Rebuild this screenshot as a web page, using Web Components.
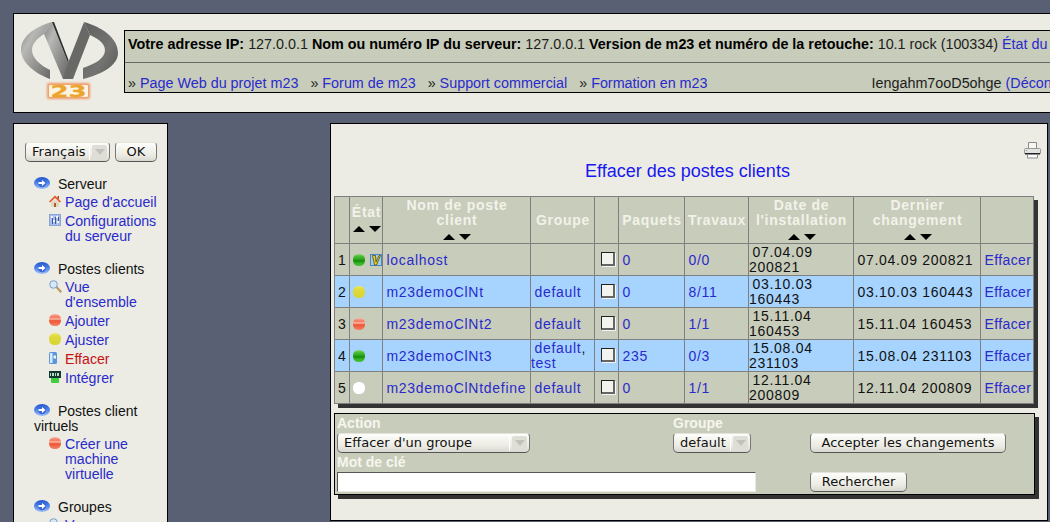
<!DOCTYPE html>
<html lang="fr">
<head>
<meta charset="utf-8">
<title>m23</title>
<style>
  html, body { margin: 0; height: 522px; overflow: hidden; background: #5a6073; }
  body { font: 14px/16px "Liberation Sans", Arial, sans-serif; }
</style>
</head>
<body>
<m23-page></m23-page>

<script>
// Small status ball and menu icons
const BALLS = {
  green: 'linear-gradient(#8ad878 0, #4cc03a 18%, #30a81f 42%, #128a08 58%, #2fae1e 72%, #4cc238 100%)',
  yellow: 'linear-gradient(#ece868 0, #deda3c 30%, #d8d432 100%)',
  red: 'linear-gradient(#f8b8a8 0, #f4735a 26%, #f9b8a6 42%, #ee5234 56%, #f48468 100%)',
  white: 'linear-gradient(#fff, #fff)'
};

const ICONS = {
  arrow: `<svg width="16" height="12" viewBox="0 0 16 12"><defs><linearGradient id="a" x1="0" y1="0" x2="0" y2="1"><stop offset="0" stop-color="#1f55d0"/><stop offset=".5" stop-color="#4f84ea"/><stop offset="1" stop-color="#a4c2f6"/></linearGradient></defs><ellipse cx="8" cy="6" rx="8" ry="6" fill="url(#a)"/><circle cx="8" cy="6" r="4.200" fill="#3a68d4"/><path d="M4.500 5h3.500V3l3.500 3L8 9V7H4.500z" fill="#fff"/></svg>`,
  home: `<svg width="12" height="12" viewBox="0 0 12 12"><path d="M2 5.500h8V12H2z" fill="#e4d8c0"/><path d="M5 8h2v4H5z" fill="#a86030"/><path d="M0 6.500 6 .5l6 6-1 1L6 3 1 7.500z" fill="#e8562c"/><path d="M8.500 1H10v3.500L8.500 3z" fill="#a84820"/></svg>`,
  config: `<svg width="12" height="12" viewBox="0 0 12 12"><path d="M0 0h12v12H0z" fill="#88a4d8"/><path d="M1 1h10v10H1z" fill="#a8bee6"/><path d="M2 2h2v2H2zM7 2h2v2H7zM4 6h2v2H4zM8 7h2v2H8z" fill="#f0f4fc"/><path d="M3 4h1v6H3zM6 3h1v7H6zM9 3h1v4H9z" fill="#3c5aa0"/></svg>`,
  search: `<svg width="13" height="13" viewBox="0 0 13 13"><path d="M6.500 7.500l1.500-1.500 5 5.500-1.500 1.500z" fill="#b8985a"/><circle cx="4.500" cy="4.500" r="3.800" fill="#d4e8fa" stroke="#7c9cc4"/></svg>`,
  trash: `<svg width="8" height="12" viewBox="0 0 8 12"><rect width="8" height="12" rx="1.500" fill="#5a96e0"/><path d="M1 1h2.500v10H1z" fill="#dcebfb"/><path d="M4.500 3.500H7v3H4.500z" fill="#f2f6fc"/></svg>`,
  chip: `<svg width="12" height="12" viewBox="0 0 12 12"><path d="M2 7h8v4a1 1 0 0 1-1 1H3a1 1 0 0 1-1-1z" fill="#3cd03a"/><path d="M0 0h12v7H0z" fill="#103a30"/><path d="M1 2h1v3H1zM3 2h2v3H3zM6 2h1v3H6zM8 2h2v3H8z" fill="#b8d8c8"/></svg>`,
  check: `<svg width="12" height="12" viewBox="0 0 12 12"><path d="M0 0h12v12H0z" fill="#4a88c0"/><path d="M1 1h10v10H1z" fill="#a8cce0"/><path d="M2.500 1.500h3L6 8l3-6.500h1.500L6.500 11H4.500z" fill="#e4d020" stroke="#403c10" stroke-width=".7"/></svg>`,
  printer: `<svg width="17" height="17" viewBox="0 0 17 17"><path d="M4.500.5h8v6h-8z" fill="#f6f6f2" stroke="#8a8a8a"/><path d="M1.500 6.500h14a1 1 0 0 1 1 1v4h-16v-4a1 1 0 0 1 1-1z" fill="#e2e2e2" stroke="#9a9a9a"/><path d="M1 11h15v1.500H1z" fill="#222"/><path d="M3.500 12.500h10v3.500h-10z" fill="#fbfbfb" stroke="#8a8a8a"/><path d="M2 8h1v1H2z" fill="#5cc05c"/></svg>`
};

class M23Icon extends HTMLElement {
  connectedCallback() {
    const root = this.attachShadow({ mode: 'open' });
    const ball = BALLS[this.getAttribute('ball')];
    const name = this.getAttribute('name');
    root.innerHTML = `
      <style>
        :host { display: inline-block; line-height: 0; vertical-align: top; }
        .ball { display: block; width: 12px; height: 12px; border-radius: 45%; }
      </style>
      ${ball ? `<span class="ball" style="background:${ball}"></span>` : ICONS[name]}`;
  }
}

class M23Logo extends HTMLElement {
  connectedCallback() {
    this.attachShadow({ mode: 'open' }).innerHTML = `
      <style>
        :host { display: block; width: 103px; height: 86px; flex: none; }
        svg { display: block; }
        text { font: bold 15px "DejaVu Sans", sans-serif; }
      </style>
      <svg width="103" height="86" viewBox="21 20 103 86">
        <defs>
          <linearGradient id="left" x1="0" y1="0" x2="1" y2="1">
            <stop offset="0" stop-color="#7e7e7e"/><stop offset=".3" stop-color="#b8b8b6"/>
            <stop offset=".65" stop-color="#8e8e8c"/><stop offset="1" stop-color="#646464"/>
          </linearGradient>
          <linearGradient id="right" x1="0" y1="0" x2="1" y2="1">
            <stop offset="0" stop-color="#5e5e5e"/><stop offset=".6" stop-color="#747472"/>
            <stop offset="1" stop-color="#565656"/>
          </linearGradient>
          <filter id="glow" x="-20%" y="-30%" width="140%" height="160%"><feGaussianBlur stdDeviation="1"/></filter>
        </defs>
        <path d="M52 22 C34 27 21 37 21 50 C21 63 36 74 50 79 L50 70 C40 65 32 58 32 50 C32 43 38 38 44 34 Z" fill="url(#left)"/>
        <path d="M44 34 L52 22 L68 63 L67 79 L63 79 Z" fill="url(#left)"/>
        <path d="M52 22 L68.500 64 L68.500 60 L54 22 Z" fill="#2c2c2c"/>
        <path d="M63 79 L68 63 L84 22 L90 35 L73 79 Z" fill="#686866"/>
        <path d="M84 22 C102 27 118 38 118 53 C118 66 100 75 83 79 L83 68 C94 64 105 59 105 50 C105 43 97 38 90 35 Z" fill="url(#right)"/>
        <rect x="47" y="83" width="43" height="16" rx="2" fill="#f29a64" filter="url(#glow)"/>
        <rect x="49" y="85" width="39" height="12" rx="1" fill="#fbf2e0"/>
        <text x="68.500" y="96.500" text-anchor="middle" fill="#eca52c" stroke="#eca52c" stroke-width=".3" textLength="36" lengthAdjust="spacingAndGlyphs">23</text>
      </svg>`;
  }
}

class M23Header extends HTMLElement {
  connectedCallback() {
    this.attachShadow({ mode: 'open' }).innerHTML = `
      <style>
        :host { display: flex; align-items: flex-start; width: 1300px; height: 98px; box-sizing: content-box;
                border: 1px solid #000; background: #ecece4; padding-left: 7px; color: #1c1c1c; font-size: 14.35px; }
        m23-logo { margin-top: 6px; }
        .info { flex: 1; margin-top: 16px; border: 1px solid #000; background: #c8ccba; padding: 5px 3px 1px; white-space: nowrap; }
        .info b { color: #000; }
        hr { border: 0; height: 1px; background: #666; margin: 10px -3px 12px; }
        a { color: #2a2acc; text-decoration: none; }
        .links { display: flex; gap: 12px; }
        .who { margin-left: 152px; }
      </style>
      <m23-logo></m23-logo>
      <div class="info">
        <div><b>Votre adresse IP:</b> 127.0.0.1 <b>Nom ou numéro IP du serveur:</b> 127.0.0.1 <b>Version de m23 et numéro de la retouche:</b> 10.1 rock (100334) <a href="#">État du serveur</a></div>
        <hr>
        <div class="links">
          <span>» <a href="#">Page Web du projet m23</a></span>
          <span>» <a href="#">Forum de m23</a></span>
          <span>» <a href="#">Support commercial</a></span>
          <span>» <a href="#">Formation en m23</a></span>
          <span class="who">Iengahm7ooD5ohge <a href="#">(Déconnexion)</a></span>
        </div>
      </div>`;
  }
}

// Old style form widgets, drawn so they look the same on every machine
const WIDGET_CSS = `
  font: 13px/18px "DejaVu Sans", sans-serif; color: #111; height: 20px; box-sizing: border-box;
  border: 1px solid #e4e4dc; border-bottom-color: #555; border-left-color: #777; border-right-color: #777;
  border-radius: 4px 4px 5px 5px; background: linear-gradient(#fdfdfa, #ecece4 65%, #d8d8d0);
`;

class M23Select extends HTMLElement {
  connectedCallback() {
    this.attachShadow({ mode: 'open' }).innerHTML = `
      <style>
        :host { display: inline-flex; ${WIDGET_CSS} width: var(--w, 85px); white-space: nowrap; overflow: hidden; }
        .txt { flex: 1; padding-left: 6px; }
        .btn { flex: none; width: 19px; margin: 1px 0; border-left: 1px solid #fff; display: flex; align-items: center; justify-content: center; }
        .btn i { display: flex; align-items: center; justify-content: center; width: 15px; height: 15px; background: #deded6; border-radius: 2px; }
        .btn i::after { content: ""; border: 5px solid transparent; border-top: 6px solid #c2c2ba; border-bottom: 0; }
      </style>
      <span class="txt"><slot></slot></span><span class="btn"><i></i></span>`;
  }
}

class M23Button extends HTMLElement {
  connectedCallback() {
    this.attachShadow({ mode: 'open' }).innerHTML = `
      <style>
        :host { display: inline-block; ${WIDGET_CSS} width: var(--w, 42px); text-align: center; white-space: nowrap; }
      </style>
      <slot></slot>`;
  }
}

class NavGroup extends HTMLElement {
  connectedCallback() {
    this.attachShadow({ mode: 'open' }).innerHTML = `
      <style>
        :host { display: block; margin-bottom: 18px; line-height: 15px; color: #111; }
        .head { margin-bottom: 3px; }
        m23-icon { margin-right: 8px; }
        .items { display: flex; flex-direction: column; gap: 4px; }
      </style>
      <div class="head"><m23-icon name="arrow"></m23-icon>${this.getAttribute('label')}</div>
      <div class="items"><slot></slot></div>`;
  }
}

class NavItem extends HTMLElement {
  connectedCallback() {
    const icon = this.getAttribute('icon');
    const ball = this.getAttribute('ball');
    this.attachShadow({ mode: 'open' }).innerHTML = `
      <style>
        :host { display: flex; padding-left: 15px; line-height: 15px; font-size: 14.15px; }
        .ic { flex: none; width: 16px; }
        a { color: ${this.hasAttribute('active') ? '#c41414' : '#2a2acc'}; text-decoration: none; }
      </style>
      <span class="ic"><m23-icon ${ball ? `ball="${ball}"` : `name="${icon}"`}></m23-icon></span>
      <a href="#"><slot></slot></a>`;
  }
}

class M23Sidebar extends HTMLElement {
  connectedCallback() {
    this.attachShadow({ mode: 'open' }).innerHTML = `
      <style>
        :host { display: block; flex: none; width: 153px; height: 600px; border: 1px solid #000; background: #ecece4; }
        .lang { display: flex; gap: 5px; padding: 18px 0 15px 11px; }
        nav { padding: 0 6px 0 20px; }
      </style>
      <div class="lang"><m23-select>Français</m23-select><m23-button>OK</m23-button></div>
      <nav>
        <nav-group label="Serveur">
          <nav-item icon="home">Page d'accueil</nav-item>
          <nav-item icon="config">Configurations du serveur</nav-item>
        </nav-group>
        <nav-group label="Postes clients">
          <nav-item icon="search">Vue d'ensemble</nav-item>
          <nav-item ball="red">Ajouter</nav-item>
          <nav-item ball="yellow">Ajuster</nav-item>
          <nav-item icon="trash" active>Effacer</nav-item>
          <nav-item icon="chip">Intégrer</nav-item>
        </nav-group>
        <nav-group label="Postes client virtuels">
          <nav-item ball="red">Créer une machine virtuelle</nav-item>
        </nav-group>
        <nav-group label="Groupes">
          <nav-item icon="search">Vue d'ensemble</nav-item>
        </nav-group>
      </nav>`;
  }
}

const CLIENTS = [
  { ball: 'green', check: true, name: 'localhost', groups: '', pkgs: '0', jobs: '0/0', inst: '07.04.09 200821', last: '07.04.09 200821' },
  { ball: 'yellow', name: 'm23demoClNt', groups: 'default', pkgs: '0', jobs: '8/11', inst: '03.10.03 160443', last: '03.10.03 160443' },
  { ball: 'red', name: 'm23demoClNt2', groups: 'default', pkgs: '0', jobs: '1/1', inst: '15.11.04 160453', last: '15.11.04 160453' },
  { ball: 'green', name: 'm23demoClNt3', groups: 'default, test', pkgs: '235', jobs: '0/3', inst: '15.08.04 231103', last: '15.08.04 231103' },
  { ball: 'white', name: 'm23demoClNtdefine', groups: 'default', pkgs: '0', jobs: '1/1', inst: '12.11.04 200809', last: '12.11.04 200809' }
];

const SORT = '<div class="sort"><i class="up"></i><i class="down"></i></div>';
const NB = '<span class="nb">&nbsp;</span>';

class ClientsTable extends HTMLElement {
  connectedCallback() {
    const link = (t) => t ? `${NB}<a href="#">${t}</a>` : '';
    const rows = CLIENTS.map((c, i) => `
      <tr class="${i % 2 ? 'blue' : ''}">
        <td class="num">${i + 1}</td>
        <td class="state"><m23-icon ball="${c.ball}"></m23-icon>${c.check ? '<m23-icon name="check"></m23-icon>' : ''}</td>
        <td>${link(c.name)}</td>
        <td>${c.groups ? NB + c.groups.split(', ').map(g => `<a href="#">${g}</a>`).join(', ') : ''}</td>
        <td class="box"><span class="cb"></span></td>
        <td>${link(c.pkgs)}</td>
        <td>${link(c.jobs)}</td>
        <td>${NB}${c.inst}</td>
        <td>${NB}${c.last}</td>
        <td class="del"><a href="#">${NB}Effacer</a></td>
      </tr>`).join('');
    this.attachShadow({ mode: 'open' }).innerHTML = `
      <style>
        :host { display: block; width: 700px; box-shadow: 4px 4px 0 #333; background: #c8ccba; }
        table { border-collapse: collapse; table-layout: fixed; width: 700px; letter-spacing: .72px; line-height: 15px; color: #111; }
        th, td { border: 1px solid #7f7f7f; padding: 1px 0 0 0; overflow: hidden; }
        th { height: 46px; color: #f2f2ea; font-weight: bold; text-align: center; padding: 0 0 0 1px; }
        td { height: 30px; }
        tr { background: #c8ccba; }
        tr.blue { background: #a6d4ff; }
        a { color: #2a2acc; text-decoration: none; }
        .nb { letter-spacing: -.5px; }
        .num { padding-left: 3px; letter-spacing: 0; }
        .state { padding: 0 0 1px 3px; white-space: nowrap; }
        .state m23-icon { vertical-align: middle; }
        .state m23-icon + m23-icon { margin-left: 5px; }
        .del { letter-spacing: .4px; white-space: nowrap; }
        .box { padding: 0 0 0 6px; }
        .cb { display: block; width: 14px; height: 14px; box-sizing: border-box; margin-top: -1px; background: #f2f2ee; border: 1px solid #222; border-right: 2px solid #666; border-bottom: 2px solid #666; box-shadow: 1px 1px 0 #f4f4f0; }
        .sort { display: flex; justify-content: center; gap: 4px; padding: 6px 0 3px; height: 6px; }
        .sort i { width: 0; height: 0; border: 6px solid transparent; }
        .sort .up { border-top: 0; border-bottom: 6px solid #000; }
        .sort .down { border-bottom: 0; border-top: 6px solid #000; }
      </style>
      <table>
        <colgroup>
          <col style="width:15px"><col style="width:33px"><col style="width:148px"><col style="width:64px"><col style="width:24px">
          <col style="width:66px"><col style="width:64px"><col style="width:105px"><col style="width:127px"><col style="width:53px">
        </colgroup>
        <tr>
          <th></th><th>État${SORT}</th><th>Nom de poste<br>client${SORT}</th><th>Groupe</th><th></th>
          <th>Paquets</th><th>Travaux</th><th>Date de<br>l'installation${SORT}</th><th>Dernier<br>changement${SORT}</th><th></th>
        </tr>
        ${rows}
      </table>`;
  }
}

class ActionForm extends HTMLElement {
  connectedCallback() {
    this.attachShadow({ mode: 'open' }).innerHTML = `
      <style>
        :host { display: grid; grid-template-columns: 336px 137px 1fr; grid-template-rows: 19px 20px 19px 20px;
                width: 697px; height: 80px; padding: 0 0 0 2px; border: 1px solid #000; background: #c8ccba;
                box-shadow: 4px 4px 0 #333; overflow: hidden; }
        label { color: #f6f6ee; font-weight: bold; line-height: 18px; }
        .kw { grid-column: 1 / 4; }
        .input { display: block; width: 419px; height: 20px; box-sizing: border-box; background: #fff; border: 1px solid #555; border-right-color: #e8e8e0; border-bottom-color: #e8e8e0; }
      </style>
      <label>Action</label><label>Groupe</label><span></span>
      <m23-select style="--w:193px">Effacer d'un groupe</m23-select>
      <m23-select style="--w:78px">default</m23-select>
      <m23-button style="--w:196px">Accepter les changements</m23-button>
      <label class="kw">Mot de clé</label>
      <span style="grid-column:1 / 3" class="input"></span>
      <m23-button style="--w:97px">Rechercher</m23-button>`;
  }
}

class M23Main extends HTMLElement {
  connectedCallback() {
    this.attachShadow({ mode: 'open' }).innerHTML = `
      <style>
        :host { display: block; flex: none; width: 713px; height: 396px; box-sizing: content-box; border: 1px solid #000; background: #ecece4; padding: 0 0 0 3px; }
        .print { display: flex; justify-content: flex-end; padding: 18px 6px 0 0; height: 16px; }
        h1 { margin: 3px 6px 14px 0; font: 18px/21px "Liberation Sans", Arial, sans-serif; color: #1818f0; text-align: center; }
        action-form { margin-top: 9px; }
      </style>
      <div class="print"><m23-icon name="printer"></m23-icon></div>
      <h1>Effacer des postes clients</h1>
      <clients-table></clients-table>
      <action-form></action-form>`;
  }
}

class M23Page extends HTMLElement {
  connectedCallback() {
    this.attachShadow({ mode: 'open' }).innerHTML = `
      <style>
        :host { display: block; padding: 13px; }
        .cols { display: flex; gap: 162px; margin-top: 10px; }
      </style>
      <m23-header></m23-header>
      <div class="cols"><m23-sidebar></m23-sidebar><m23-main></m23-main></div>`;
  }
}

customElements.define('m23-icon', M23Icon);
customElements.define('m23-logo', M23Logo);
customElements.define('m23-header', M23Header);
customElements.define('m23-select', M23Select);
customElements.define('m23-button', M23Button);
customElements.define('nav-group', NavGroup);
customElements.define('nav-item', NavItem);
customElements.define('m23-sidebar', M23Sidebar);
customElements.define('clients-table', ClientsTable);
customElements.define('action-form', ActionForm);
customElements.define('m23-main', M23Main);
customElements.define('m23-page', M23Page);
</script>
</body>
</html>
